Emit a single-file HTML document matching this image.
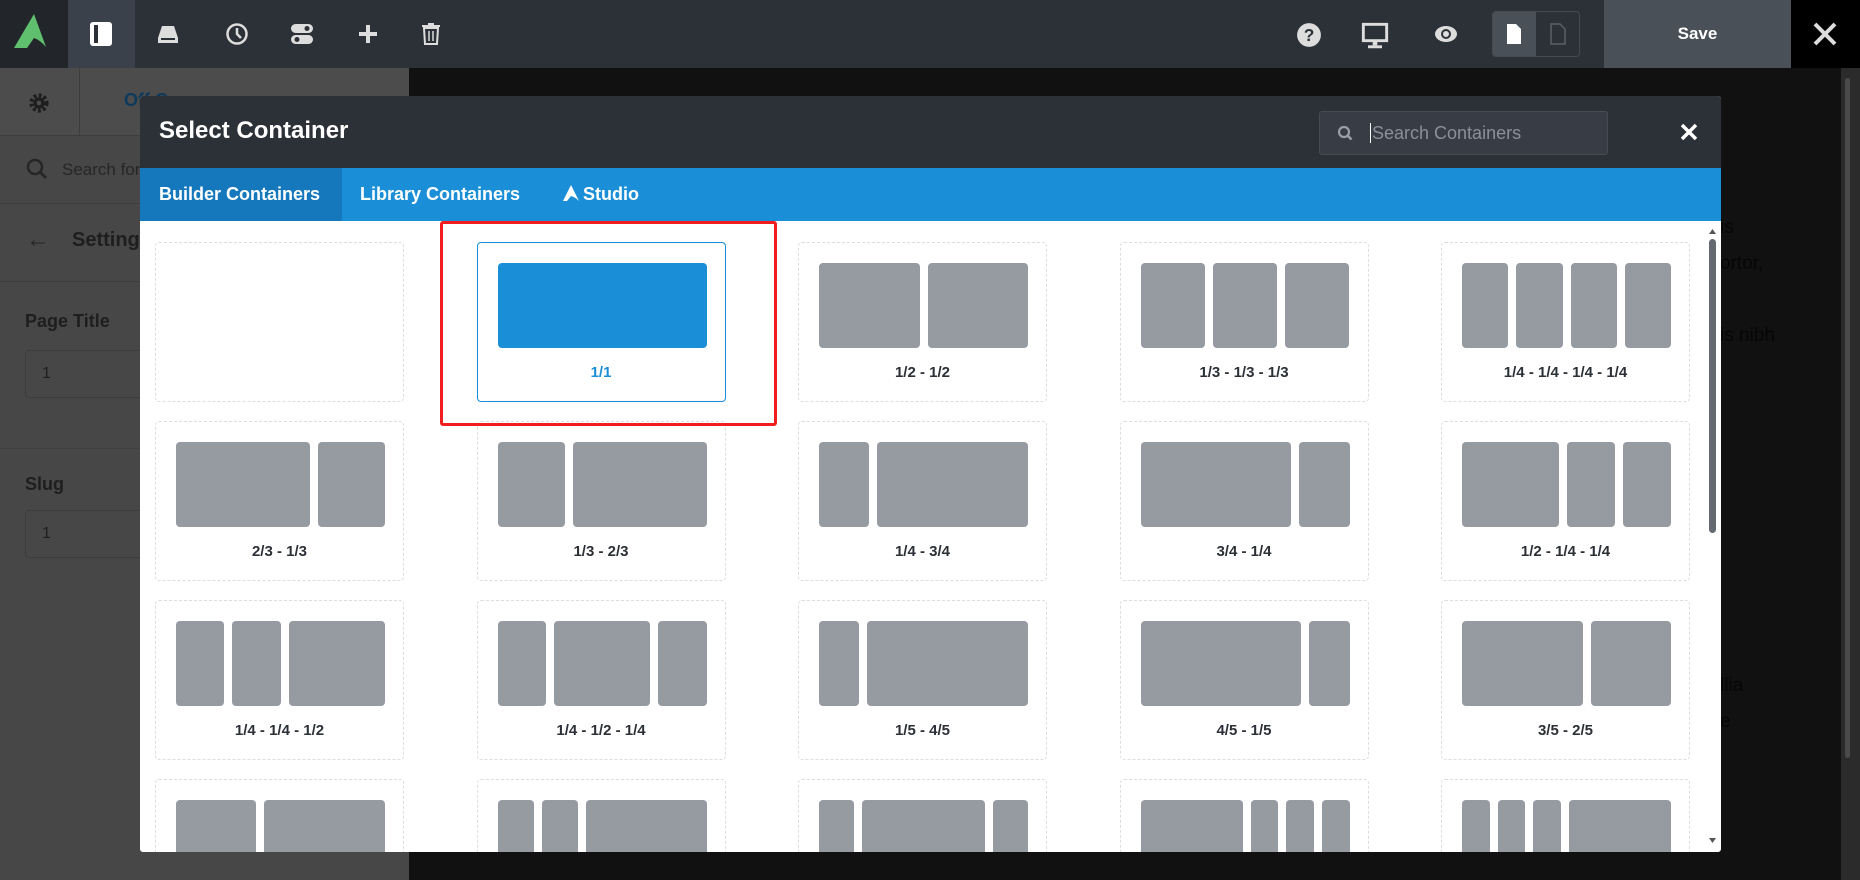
<!DOCTYPE html>
<html style="overflow:hidden;width:1860px;height:880px"><head><meta charset="utf-8"><style>
*{box-sizing:border-box;margin:0;padding:0}
body{width:1860px;height:880px;overflow:hidden;background:#111;font-family:"Liberation Sans",sans-serif;position:relative}
.top{position:absolute;left:0;top:0;width:1860px;height:68px;background:#2c3037}
.logo{position:absolute;left:0;top:0;width:68px;height:68px;background:#22262b}
.act{position:absolute;left:68px;top:0;width:67px;height:68px;background:#3b414a}
.ic{position:absolute;top:22px;width:24px;height:24px}
.save{position:absolute;left:1604px;top:0;width:187px;height:68px;background:#4a5058;color:#fff;font-weight:bold;font-size:17px;text-align:center;line-height:68px}
.xx{position:absolute;left:1791px;top:0;width:69px;height:68px;background:#000}
.tog{position:absolute;left:1492px;top:11px;width:88px;height:46px;border:1px solid #454b53;border-radius:4px;overflow:hidden}
.left{position:absolute;left:0;top:68px;width:409px;height:812px;background:#474747;overflow:hidden}
.lrow{position:absolute;left:0;width:409px;border-bottom:1px solid #3d3d3d}
.lab{position:absolute;left:25px;font-weight:bold;font-size:18px;color:#1e1e1e}
.inp{position:absolute;left:25px;width:370px;height:48px;border:1px solid #3d3d3d;border-radius:4px;color:#1e1e1e;font-size:16px;padding:14px 0 0 16px}
.sb{position:absolute;left:1841px;top:68px;width:19px;height:812px;background:#2b2b2b}
.modal{position:absolute;left:140px;top:96px;width:1581px;height:756px;background:#fff;overflow:hidden;border-radius:3px}
.mh{height:72px;background:#2c3037;position:relative}
.mh h1{position:absolute;left:19px;top:21px;font-size:24px;color:#fff;font-weight:bold}
.srch{position:absolute;left:1179px;top:15px;width:289px;height:44px;background:#383d45;border:1px solid #454b53;border-radius:3px;color:#8a9099;font-size:18px;padding:11px 0 0 50px}
.tabs{height:53px;background:#1a8fd8;position:relative}
.tab{position:absolute;top:0;height:53px;line-height:53px;color:#fff;font-weight:bold;font-size:18px}
.card{position:absolute;width:249px;height:160px;border:1px dashed #ddd;border-radius:4px}
.blk{position:absolute;left:20px;top:20px;width:209px;height:85px;display:flex;gap:8px}
.blk div{background:#969aa1;border-radius:4px}
.lbl{position:absolute;left:0;width:100%;top:121px;text-align:center;font-weight:bold;font-size:15px;color:#2c3037}
</style></head><body>
<div class="top">
<div class="logo"><svg width="68" height="68"><path d="M34 14 L46 47 Q40 40 34 38 L27 48 L14 48 Z" fill="#5fbf6e"/></svg></div>
<div class="act"><svg width="67" height="68"><rect x="22" y="22" width="22" height="24" rx="3" fill="#fff"/><rect x="26" y="25" width="4" height="18" fill="#2c3037"/></svg></div>
<svg class="ic" style="left:156px" viewBox="0 0 24 24"><path d="M6 4h12l4 12v5H2v-5z" fill="#ddd"/><rect x="5" y="16" width="14" height="2" fill="#2c3037"/></svg>
<svg class="ic" style="left:225px" viewBox="0 0 24 24"><circle cx="12" cy="12" r="9.5" fill="none" stroke="#ddd" stroke-width="2.5"/><path d="M12 6v6l4 4" stroke="#ddd" stroke-width="2.5" fill="none"/></svg>
<svg class="ic" style="left:290px" viewBox="0 0 24 24"><rect x="1" y="2" width="22" height="9" rx="4.5" fill="#ddd"/><rect x="1" y="13" width="22" height="9" rx="4.5" fill="#ddd"/><circle cx="17" cy="6.5" r="2.5" fill="#2c3037"/><circle cx="7" cy="17.5" r="2.5" fill="#2c3037"/></svg>
<svg class="ic" style="left:356px" viewBox="0 0 24 24"><path d="M12 3v18M3 12h18" stroke="#ddd" stroke-width="4"/></svg>
<svg class="ic" style="left:419px" viewBox="0 0 24 24"><path d="M5 6h14l-1 16H6z M3 4h18M9 2h6" stroke="#ddd" stroke-width="2" fill="none"/><path d="M10 9v10M14 9v10" stroke="#ddd" stroke-width="1.5"/></svg>
<svg class="ic" style="left:1296px;width:26px;height:26px" viewBox="0 0 24 24"><circle cx="12" cy="12" r="11" fill="#ddd"/><text x="12" y="17.5" text-anchor="middle" font-size="16" font-weight="bold" fill="#2c3037" font-family="Liberation Sans">?</text></svg>
<svg class="ic" style="left:1361px;width:28px;height:28px" viewBox="0 0 24 24"><rect x="2" y="2" width="20" height="14" fill="none" stroke="#ddd" stroke-width="2.5"/><rect x="10" y="16" width="4" height="4" fill="#ddd"/><rect x="6" y="20" width="12" height="2.5" fill="#ddd"/></svg>
<svg class="ic" style="left:1432px;width:28px" viewBox="0 0 24 24"><ellipse cx="12" cy="12" rx="11" ry="8" fill="#ddd"/><circle cx="12" cy="12" r="5" fill="#2c3037"/><circle cx="12" cy="12" r="3" fill="#ddd"/></svg>
<div class="tog"><div style="position:absolute;left:0;top:0;width:43px;height:46px;background:#4a5058"></div>
<svg style="position:absolute;left:13px;top:11px" width="16" height="22"><path d="M1 1h9l5 5v15H1z" fill="#fff"/></svg>
<svg style="position:absolute;left:57px;top:11px" width="16" height="22"><path d="M1 1h9l5 5v15H1z" fill="none" stroke="#5a6068" stroke-width="1.5"/></svg></div>
<div class="save">Save</div>
<div class="xx"><svg width="69" height="68"><path d="M24 24l20 20M44 24L24 44" stroke="#ddd" stroke-width="4"/></svg></div>
</div>
<div class="left">
<div class="lrow" style="top:0;height:68px;background:#4c4c4c"><svg style="position:absolute;left:28px;top:24px" width="22" height="22" viewBox="0 0 24 24"><circle cx="12" cy="12" r="8" fill="none" stroke="#1e1e1e" stroke-width="5" stroke-dasharray="3 2.3"/><circle cx="12" cy="12" r="6" fill="#1e1e1e"/><circle cx="12" cy="12" r="2.5" fill="#4c4c4c"/></svg>
<div style="position:absolute;left:79px;top:0;width:1px;height:68px;background:#3d3d3d"></div>
<span style="position:absolute;left:124px;top:22px;color:#0d3a5c;font-weight:bold;font-size:18px">Off Canvas</span></div>
<div class="lrow" style="top:68px;height:68px"><svg style="position:absolute;left:26px;top:22px" width="22" height="22"><circle cx="9" cy="9" r="7" fill="none" stroke="#262626" stroke-width="2.5"/><path d="M14 14l6 6" stroke="#262626" stroke-width="3"/></svg><span style="position:absolute;left:62px;top:24px;font-size:17px;color:#262626">Search for</span></div>
<div class="lrow" style="top:136px;height:78px"><span style="position:absolute;left:26px;top:22px;font-size:24px;color:#262626">←</span><span class="lab" style="left:72px;top:25px;font-size:20px">Settings</span></div>
<div class="lab" style="top:243px">Page Title</div>
<div class="inp" style="top:282px">1</div>
<div class="lrow" style="top:380px;height:0;border-color:#404040"></div>
<div class="lab" style="top:406px">Slug</div>
<div class="inp" style="top:442px">1</div>
</div>
<div style="position:absolute;left:1720px;top:210px;color:#060606;font-size:19px;line-height:36px">is<br>ortor,<br><br>is nibh</div>
<div style="position:absolute;left:1720px;top:668px;color:#060606;font-size:19px;line-height:36px">llia<br>e</div>
<div class="sb"><div style="position:absolute;left:4px;top:10px;width:5px;height:680px;background:#4a4a4a;border-radius:3px"></div></div>
<div class="modal">
<div class="mh"><h1>Select Container</h1>
<div class="srch"><svg style="position:absolute;left:17px;top:13px" width="16" height="16"><circle cx="7" cy="7" r="5" fill="none" stroke="#9aa0a8" stroke-width="2.2"/><path d="M10.5 10.5l4 4" stroke="#9aa0a8" stroke-width="2.5"/></svg><span style="border-left:1.5px solid #fff;padding-left:1px">Search Containers</span></div>
<svg style="position:absolute;left:1539px;top:26px" width="20" height="20"><path d="M3 3l14 14M17 3L3 17" stroke="#fff" stroke-width="3.5"/></svg></div>
<div class="tabs"><div class="tab" style="left:0;width:202px;background:#1578bd;padding-left:19px">Builder Containers</div>
<div class="tab" style="left:220px">Library Containers</div>
<div class="tab" style="left:422px"><svg width="18" height="18" style="vertical-align:-2px;margin-right:3px"><path d="M9 1L17 17Q13 13 9 12L5 17L1 17Z" fill="#fff"/></svg>Studio</div></div>
<div style="position:absolute;left:1568px;top:131px;width:9px;height:625px">
<svg width="9" height="8" style="position:absolute;top:0"><path d="M1 7L4.5 2L8 7Z" fill="#555"/></svg>
<div style="position:absolute;left:1px;top:12px;width:7px;height:294px;background:#646a70;border-radius:4px"></div>
<svg width="9" height="8" style="position:absolute;top:610px"><path d="M1 1L4.5 6L8 1Z" fill="#555"/></svg></div>
<div id="grid"></div>
<div style="position:absolute;left:300px;top:125px;width:337px;height:205px;border:3px solid #f01e1e;border-radius:3px"></div>
</div>
<script>
var rows=[[null,[1],[1,1],[1,1,1],[1,1,1,1]],[[2,1],[1,2],[1,3],[3,1],[2,1,1]],[[1,1,2],[1,2,1],[1,4],[4,1],[3,2]],[[2,3],[1,1,3.3],[1,3.5,1],[3.7,1,1,1],[1,1,1,3.7]]];
var labels=[["","1/1","1/2 - 1/2","1/3 - 1/3 - 1/3","1/4 - 1/4 - 1/4 - 1/4"],["2/3 - 1/3","1/3 - 2/3","1/4 - 3/4","3/4 - 1/4","1/2 - 1/4 - 1/4"],["1/4 - 1/4 - 1/2","1/4 - 1/2 - 1/4","1/5 - 4/5","4/5 - 1/5","3/5 - 2/5"],["","","","",""]];
var h="";
for(var r=0;r<4;r++)for(var c=0;c<5;c++){var x=15+c*321.5,y=146+r*179;var sel=(r==0&&c==1);
h+='<div class="card" style="left:'+x+'px;top:'+y+'px;'+(sel?'border:1px solid #1a8fd8;':'')+'">';
var b=rows[r][c];if(b){h+='<div class="blk">';b.forEach(function(f){h+='<div style="flex:'+f+' 1 0;'+(sel?'background:#1a8fd8;':'')+'"></div>'});h+='</div>';}
if(labels[r][c])h+='<div class="lbl" style="'+(sel?'color:#1a8fd8':'')+'">'+labels[r][c]+'</div>';
h+='</div>';}
document.getElementById('grid').innerHTML=h;
</script>
</body></html>
